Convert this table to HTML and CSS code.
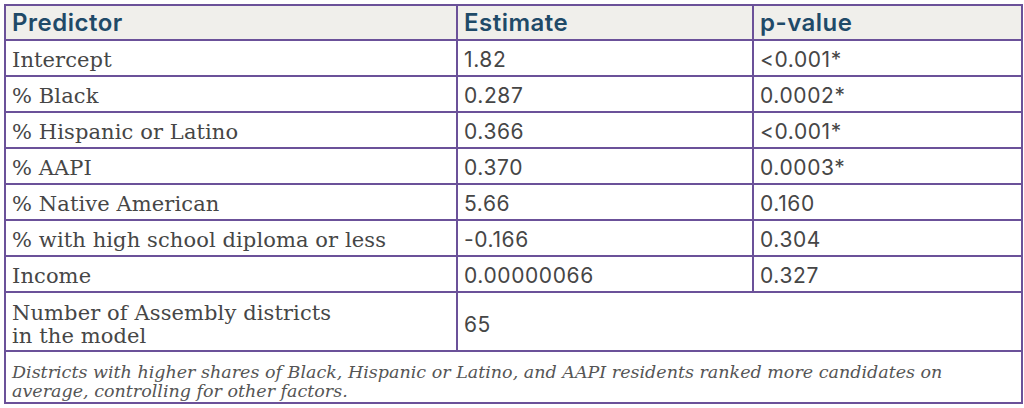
FILE: index.html
```html
<!DOCTYPE html>
<html>
<head>
<meta charset="utf-8">
<link rel="stylesheet" href="styles.css">
</head>
<body>
<table class="reg">
  <colgroup>
    <col class="c1"><col class="c2"><col class="c3">
  </colgroup>
  <thead>
    <tr><th>Predictor</th><th>Estimate</th><th>p-value</th></tr>
  </thead>
  <tbody>
    <tr><td class="label">Intercept</td><td class="num">1.82</td><td class="num">&lt;0.001*</td></tr>
    <tr><td class="label">% Black</td><td class="num">0.287</td><td class="num">0.0002*</td></tr>
    <tr><td class="label">% Hispanic or Latino</td><td class="num">0.366</td><td class="num">&lt;0.001*</td></tr>
    <tr><td class="label">% AAPI</td><td class="num">0.370</td><td class="num">0.0003*</td></tr>
    <tr><td class="label">% Native American</td><td class="num">5.66</td><td class="num">0.160</td></tr>
    <tr><td class="label">% with high school diploma or less</td><td class="num">-0.166</td><td class="num">0.304</td></tr>
    <tr><td class="label">Income</td><td class="num">0.00000066</td><td class="num">0.327</td></tr>
    <tr class="tall"><td class="label">Number of Assembly districts<br>in the model</td><td class="num" colspan="2">65</td></tr>
    <tr class="note"><td colspan="3">Districts with higher shares of Black, Hispanic or Latino, and AAPI residents ranked more candidates on average, controlling for other factors.</td></tr>
  </tbody>
</table>
</body>
</html>
```
FILE: styles.css
```css
html, body {
  margin: 0;
  padding: 0;
  background: #ffffff;
}
body {
  padding: 4px 3px 0 4px;
}
.reg {
  border-collapse: collapse;
  width: 1017px;
  table-layout: fixed;
}
.c1 { width: 452px; }
.c2 { width: 296px; }
.c3 { width: 269px; }
.reg th, .reg td {
  border: 2px solid #6b5199;
  padding: 0 0 0 6px;
  text-align: left;
  vertical-align: middle;
}
.reg th {
  background: #f0efeb;
  height: 33px;
  line-height: 26px;
  font-family: "Inter", "Liberation Sans", sans-serif;
  font-weight: 600;
  font-size: 24px;
  color: #1f4a68;
  letter-spacing: 0.5px;
}
.reg td {
  height: 30px;
  padding-top: 4px;
  line-height: 26px;
  color: #464646;
}
.label {
  font-family: "DejaVu Serif", "Liberation Serif", serif;
  font-size: 21px;
  letter-spacing: 0.1px;
}
.num {
  font-family: "Inter", "Liberation Sans", sans-serif;
  font-size: 21px;
  letter-spacing: 0.6px;
}
.tall td {
  height: 51px;
  padding-top: 6px;
  line-height: 23px;
}
.note td {
  height: 40px;
  padding-top: 10px;
  font-family: "DejaVu Serif", "Liberation Serif", serif;
  font-style: italic;
  font-size: 17.5px;
  line-height: 19px;
  color: #555555;
}
```
